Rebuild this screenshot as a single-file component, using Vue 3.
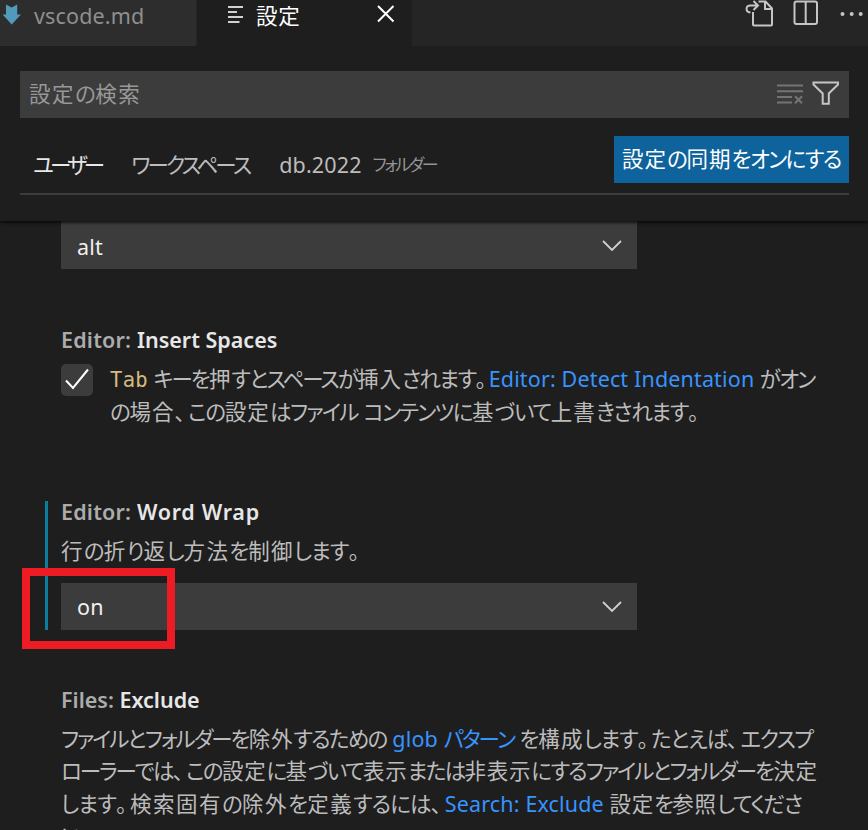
<script setup>
import { h } from 'vue'

const scripts = [
  ['kanji', /[\u3400-\u9fff]/],
  ['hira', /[\u3040-\u309f]/],
  ['kata', /[\u30a0-\u30ff]/],
  ['punct', /[\u3000-\u303f]/],
]
const kindOf = (c) => (scripts.find(([, re]) => re.test(c)) || ['latin'])[0]

// Splits mixed text into runs of one script, so each gets its own tracking.
function Txt(props) {
  const runs = []
  for (const c of props.t) {
    const kind = kindOf(c)
    const last = runs[runs.length - 1]
    if (last && last.kind === kind) last.text += c
    else runs.push({ kind, text: c })
  }
  return h('span', { class: 'txt' }, runs.map((r) => h('span', { class: r.kind }, r.text)))
}
Txt.props = ['t']
</script>

<template>
  <div class="window">
    <nav class="tabbar">
      <div class="tab file">
        <svg class="md" width="20" height="22" viewBox="0 0 20 22"><path d="M4 0.5L9.7 3.5L15.2 0.5V10.5H19L9.7 20.5L0.6 10.5H4Z" fill="#519aba" /></svg>
        <Txt t="vscode.md" />
      </div>
      <div class="tab current">
        <svg class="lines" width="16" height="18" viewBox="0 0 16 18" stroke="#d0d0d0" stroke-width="2"><path d="M0 2H15M0 7H9M0 12H15M0 17H11.500" /></svg>
        <Txt t="設定" />
        <svg class="close" width="18" height="18" viewBox="0 0 18 18" stroke="#fff" stroke-width="2" fill="none"><path d="M1 1L16.500 16.500M16.500 1L1 16.500" /></svg>
      </div>
      <div class="actions">
        <svg width="30" height="30" viewBox="0 0 30 30" fill="none" stroke="#c5c5c5" stroke-width="2"><path d="M13.500 3.500H20.500L27 10.500V26.500Q27 27.500 26 27.500H9Q8 27.500 8 26.500V14M20 4V11H26.500M5.500 14.500C0 14 .500 7.500 5.500 7.500H12.500M8.500 3L13 7.500L8.500 12" /></svg>
        <svg class="split" width="26" height="26" viewBox="0 0 26 26" fill="none" stroke="#c5c5c5" stroke-width="2"><rect x="1.500" y="1.500" width="22.500" height="22.500" rx="2" /><path d="M12.700 1V24" /></svg>
        <svg class="dots" width="24" height="6" viewBox="0 0 24 6" fill="#c5c5c5"><circle cx="2.500" cy="3" r="2" /><circle cx="11.700" cy="3" r="2" /><circle cx="20.700" cy="3" r="2" /></svg>
      </div>
    </nav>

    <header class="head">
      <div class="search">
        <Txt class="placeholder" t="設定の検索" />
        <svg class="clear" width="28" height="20" viewBox="0 0 28 20" fill="none" stroke="#747474" stroke-width="2"><path d="M0 1.500H26M0 7.200H26M0 12.900H15M0 18.500H15M18 12.200L25 19.200M25 12.200L18 19.200" /></svg>
        <svg class="filter" width="28" height="25" viewBox="0 0 28 25" fill="none" stroke="#c5c5c5" stroke-width="2"><path d="M1.500 1.500H26V3.500L16.800 12.500V22.800H10.700V12.500L1.500 3.500Z" /></svg>
      </div>
      <div class="scopes">
        <Txt class="scope user" t="ユーザー" />
        <Txt class="scope workspace" t="ワークスペース" />
        <Txt class="scope db" t="db.2022" />
        <Txt class="folder" t="フォルダー" />
        <button class="sync"><Txt t="設定の同期をオンにする" /></button>
      </div>
    </header>

    <main class="settings">
      <div class="select first">
        <Txt t="alt" />
        <svg class="chev" width="20" height="12" viewBox="0 0 20 12" fill="none" stroke="#d0d0d0" stroke-width="1.800"><path d="M1 1L10 10L19 1" /></svg>
      </div>

      <section class="item spaces">
        <h3>Editor: <b>Insert Spaces</b></h3>
        <div class="check-row">
          <span class="check"><svg width="26" height="24" viewBox="0 0 26 24" fill="none" stroke="#fff" stroke-width="2"><path d="M2 12.500L9 20L24 1.500" /></svg></span>
          <div class="desc">
            <p class="s1"><code>Tab</code> <Txt t="キーを押すとスペースが挿入されます。" /><a><Txt t="Editor: Detect Indentation" /></a> <Txt t="がオン" /></p>
            <p class="s2"><Txt t="の場合、この設定はファイル コンテンツに基づいて上書きされます。" /></p>
          </div>
        </div>
      </section>

      <section class="item wordwrap">
        <i class="modified"></i>
        <h3>Editor: <b>Word Wrap</b></h3>
        <p class="w1"><Txt t="行の折り返し方法を制御します。" /></p>
        <div class="select">
          <Txt t="on" />
          <svg class="chev" width="20" height="12" viewBox="0 0 20 12" fill="none" stroke="#d0d0d0" stroke-width="1.800"><path d="M1 1L10 10L19 1" /></svg>
        </div>
        <i class="marker"></i>
      </section>

      <section class="item files">
        <h3>Files: <b>Exclude</b></h3>
        <div class="desc">
          <p class="f1"><Txt t="ファイルとフォルダーを除外するための" /> <a><Txt t="glob パターン" /></a> <Txt class="rest" t="を構成します。たとえば、エクスプ" /></p>
          <p class="f2"><Txt t="ローラーでは、この設定に基づいて表示または非表示にするファイルとフォルダーを決定" /></p>
          <p class="f3"><Txt class="lead" t="します。検索固有の除外を定義するには、" /><a><Txt t="Search: Exclude" /></a> <Txt t="設定を参照してくださ" /></p>
          <p class="f4"><Txt t="い。" /></p>
        </div>
      </section>
    </main>
  </div>
</template>

<style>
body { background: #1e1e1e; overflow: hidden; }
.txt .kanji { letter-spacing: calc(0.8px + var(--t, 0px)); }
.txt .hira { letter-spacing: calc(-1.6px + var(--t, 0px)); }
.txt .kata { letter-spacing: calc(-2px + var(--t, 0px)); }
.txt .punct { letter-spacing: calc(2.5px + var(--t, 0px)); }
.txt .latin { letter-spacing: 0.15px; }
</style>

<style scoped>
.window {
  width: 868px;
  height: 830px;
  overflow: hidden;
  background: #1e1e1e;
  color: #bcbcbc;
  font: 400 21.5px/32.5px "Noto Sans", "Noto Sans CJK JP", sans-serif;
  font-feature-settings: "palt";
  white-space: nowrap;
}
svg { display: block; flex: none; }
.tabbar { display: flex; height: 46px; background: #252526; }
.tab { display: flex; box-sizing: border-box; height: 46px; align-items: flex-start; }
.file { width: 197px; background: #2d2d2d; color: #8f8f8f; padding-left: 2px; border-right: 1px solid #252526; }
.md { margin: 4px 12px 0 0; }
.current { width: 215px; background: #1e1e1e; color: #fff; padding-left: 31px; }
.lines { margin: 5px 12px 0 0; }
.close { margin: 5px 0 0 76px; }
.actions { display: flex; flex: 1; padding-left: 333px; }
.actions svg { margin-top: -2px; }
.actions .split { margin: 0 0 0 18px; }
.actions .dots { margin: 11px 0 0 21px; }

.head {
  height: 175px;
  box-sizing: border-box;
  padding: 25px 19px 0 20px;
  background: #1e1e1e;
  box-shadow: 0 1px 4px #000;
  clip-path: inset(0 0 -8px 0);
  position: relative;
  z-index: 1;
}
.search { display: flex; align-items: center; height: 47px; background: #3c3c3c; padding: 0 9px; color: #989898; }
.placeholder { --t: 0.8px; }
.clear { margin: -2px 7px 0 auto; }
.filter { margin-top: -3px; }
.scopes { display: flex; height: 57px; margin-top: 18px; border-bottom: 2px solid #3c3c3c; }
.scope { line-height: 58px; margin-right: 30px; }
.user { --t: -1.800px; color: #e7e7e7; margin-left: 13px; }
.workspace { --t: -0.900px; }
.scope + .folder { --t: -0.400px; margin-left: -19px; font-size: 17px; line-height: 58px; color: #949494; }
.sync { --t: 0.250px; width: 235px; height: 47px; margin-left: auto; padding: 0; border: 0; background: #0e639c; color: #fff; font: inherit; font-feature-settings: inherit; }

.select { display: flex; align-items: center; justify-content: space-between; box-sizing: border-box; width: 576px; height: 47px; padding: 1px 15px 0 16px; background: #3c3c3c; color: #f0f0f0; }
.select .chev { margin-top: -1px; }
.select.first { margin-left: 61px; height: 48px; padding-top: 4px; }
.select.first .chev { margin-top: -3px; }
.item { padding-left: 61px; position: relative; }
.spaces { margin-top: 55px; height: 172px; }
h3 { margin: 0; font-size: 21.500px; line-height: 32px; font-weight: 600; letter-spacing: 0.200px; color: #acacac; }
h3 b { font-weight: 600; letter-spacing: 0; color: #e7e7e7; }
.wordwrap h3 b { letter-spacing: 0.700px; }
.files h3 { letter-spacing: 0; }
p { margin: 0; height: 32.500px; }
a { color: #3794ff; }
code { font: 20.500px/20px "DejaVu Sans Mono", monospace; letter-spacing: 0.300px; color: #d7ba7d; }
.check-row { display: flex; padding-top: 8px; }
.check { display: flex; align-items: center; justify-content: center; width: 32px; height: 32px; border-radius: 5px; background: #3c3c3c; margin-right: 17px; }
.check-row .desc { margin-top: -1px; }
.s2 { --t: 0.270px; }
.wordwrap { height: 188px; }
.wordwrap p { --t: 0.600px; padding: 7px 0 15.500px; }
.modified { position: absolute; left: 45px; top: 5px; width: 3px; height: 129px; background: #0c7d9d; }
.marker { position: absolute; left: 22px; top: 72px; width: 153px; height: 81px; box-sizing: border-box; border: 8px solid #ed1c24; }
.files .desc { padding-top: 6.500px; }
.f1 .rest { --t: 0.400px; }
.f2 { --t: -0.050px; }
.f3 .lead { --t: 0.750px; }
</style>
